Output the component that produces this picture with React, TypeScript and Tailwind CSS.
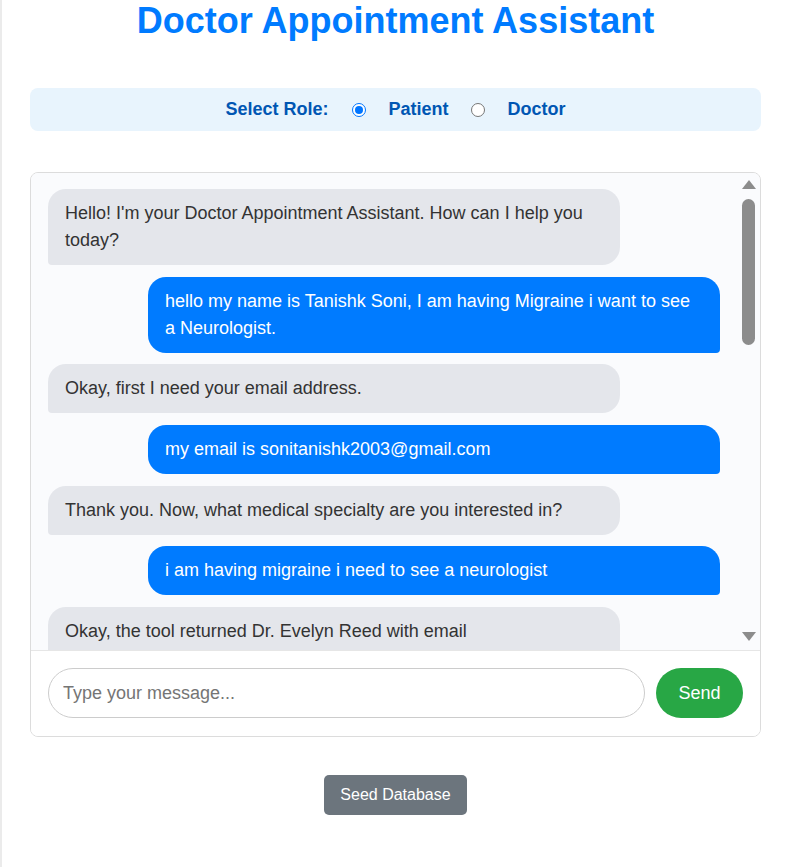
import React from "react";

type Msg = { from: "bot" | "user"; text: string };

const messages: Msg[] = [
  { from: "bot", text: "Hello! I'm your Doctor Appointment Assistant. How can I help you today?" },
  { from: "user", text: "hello my name is Tanishk Soni, I am having Migraine i want to see a Neurologist." },
  { from: "bot", text: "Okay, first I need your email address." },
  { from: "user", text: "my email is sonitanishk2003@gmail.com" },
  { from: "bot", text: "Thank you. Now, what medical specialty are you interested in?" },
  { from: "user", text: "i am having migraine i need to see a neurologist" },
  {
    from: "bot",
    text: "Okay, the tool returned Dr. Evelyn Reed with email evelyn.reed@example.com. Would you like to book an appointment with her?",
  },
];

const Radio = ({ checked }: { checked: boolean }) =>
  checked ? (
    <span className="flex h-[14px] w-[14px] items-center justify-center rounded-full border border-[#0075ff] bg-white">
      <span className="h-[8px] w-[8px] rounded-full bg-[#0075ff]" />
    </span>
  ) : (
    <span className="block h-[14px] w-[14px] rounded-full border border-[#767676] bg-white" />
  );

const Bubble = ({ msg }: { msg: Msg }) => {
  const styles = {
    bot: "self-start bg-[#e4e6eb] text-[#333] rounded-[18px] rounded-bl-[4px] pr-[17px]",
    user: "self-end bg-[#007bff] text-white rounded-[18px] rounded-br-[4px] mr-[17px] pr-[21px]",
  };
  return (
    <div className={`w-[572px] shrink-0 pl-[17px] py-[11px] text-[18px] leading-[27px] ${styles[msg.from]}`}>
      {msg.text}
    </div>
  );
};

const App = () => {
  return (
    <div className="h-[867px] overflow-hidden border-l-2 border-[#ebebeb] bg-white font-['Liberation_Sans',Arial,sans-serif]">
      <div className="ml-[28px] w-[731px]">
        <h1 className="pt-[1px] text-center text-[36px] font-bold leading-[40px] text-[#007bff]">
          Doctor Appointment Assistant
        </h1>

        <div className="mt-[47px] flex h-[43px] items-center justify-center rounded-lg bg-[#e8f4fd] text-[18px] font-bold text-[#0056b3]">
          <span>Select Role:</span>
          <span className="ml-[23px]">
            <Radio checked />
          </span>
          <span className="ml-[23px]">Patient</span>
          <span className="ml-[22px]">
            <Radio checked={false} />
          </span>
          <span className="ml-[23px]">Doctor</span>
        </div>

        <div className="mt-[41px] overflow-hidden rounded-lg border border-[#dcdcdc]">
          <div className="flex h-[478px] border-b border-[#e6e6e6] bg-[#fafbfd]">
            <div className="flex flex-1 flex-col gap-[11.7px] overflow-hidden pl-[17px] pt-[16px]">
              {messages.map((m, i) => (
                <Bubble key={i} msg={m} />
              ))}
            </div>
            {/* scrollbar */}
            <div className="flex w-[23px] flex-col items-center pb-[9px] pt-[7px]">
              <svg width="14" height="9" viewBox="0 0 14 9">
                <path d="M7 0 L14 9 L0 9 Z" fill="#8c8c8c" />
              </svg>
              <div className="mt-[10px] h-[146px] w-[13px] rounded-full bg-[#8c8c8c]" />
              <div className="flex-1" />
              <svg width="14" height="9" viewBox="0 0 14 9">
                <path d="M0 0 L14 0 L7 9 Z" fill="#8c8c8c" />
              </svg>
            </div>
          </div>
          <div className="flex gap-[11px] bg-white px-[17px] pb-[18px] pt-[17px]">
            <input
              type="text"
              placeholder="Type your message..."
              className="h-[50px] flex-1 rounded-full border border-[#cccccc] px-[14px] text-[18px] text-[#333] outline-none placeholder:text-[#757575]"
            />
            <button className="h-[50px] w-[87px] rounded-full bg-[#28a745] text-[18px] text-white">
              Send
            </button>
          </div>
        </div>

        <div className="mt-[38px] flex justify-center">
          <button className="h-[40px] w-[143px] rounded-[5px] bg-[#6c757d] text-[16px] text-white">
            Seed Database
          </button>
        </div>
      </div>
    </div>
  );
};

export default App;
